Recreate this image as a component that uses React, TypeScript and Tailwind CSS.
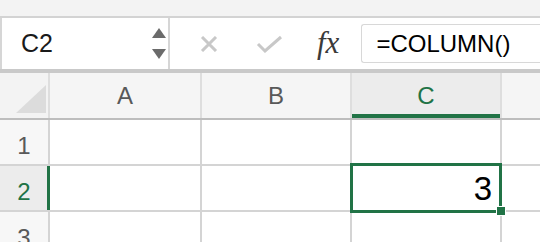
import React from "react";

const GREEN = "#217346";

function Stepper() {
  return (
    <div className="flex flex-col gap-[11px] items-center">
      <svg width="14" height="10" viewBox="0 0 14 10">
        <polygon points="7,0 14,10 0,10" fill="#6b6b6b" />
      </svg>
      <svg width="14" height="10" viewBox="0 0 14 10">
        <polygon points="0,0 14,0 7,10" fill="#6b6b6b" />
      </svg>
    </div>
  );
}

export default function App() {
  const cell = "bg-white h-[44px]";
  const rowNum = "h-[44px] flex items-center justify-center text-[24px] pt-[7px]";
  return (
    <div
      className="w-[540px] h-[242px] overflow-hidden bg-white"
      style={{ fontFamily: "'Liberation Sans', Arial, sans-serif" }}
    >
      {/* top band */}
      <div className="h-[16px] bg-[#f3f3f3] border-b-2 border-[#d3d3d3] box-content" />

      {/* formula bar */}
      <div className="flex h-[51px] bg-white">
        <div className="w-[168px] flex items-center pl-[19px] pr-[2px] border-l-2 border-[#d6d6d6]">
          <span className="text-[25px] text-[#1a1a1a] flex-1">C2</span>
          <Stepper />
        </div>
        <div className="w-[2px] bg-[#d6d6d6]" />
        <div className="flex-1 flex items-center">
          <svg className="ml-[30px]" width="18" height="16" viewBox="0 0 18 16">
            <path d="M2 1 L16 15 M16 1 L2 15" stroke="#c8c8c8" strokeWidth="3" />
          </svg>
          <svg className="ml-[38px]" width="27" height="18" viewBox="0 0 27 18">
            <path d="M2 9 L9 16 L25 2" stroke="#c8c8c8" strokeWidth="3" fill="none" />
          </svg>
          <span
            className="ml-[34px] text-[31px] italic text-[#3a3a3a] leading-none -mt-[2px]"
            style={{ fontFamily: "'Liberation Serif', 'Times New Roman', serif" }}
          >
            fx
          </span>
          <div className="ml-[22px] self-end mb-[6px] h-[39px] flex-1 border border-r-0 border-[#d8d8d8] rounded-l-[3px] flex items-center pl-[14px]">
            <span className="text-[24px] text-black">=COLUMN()</span>
          </div>
        </div>
      </div>

      {/* separator */}
      <div className="border-t-2 border-b-2 border-[#c9c9c9] bg-[#ececec] h-[0px] box-content" />

      {/* column headers */}
      <div className="grid grid-cols-[48px_150px_148px_148px_1fr] gap-x-[2px] bg-[#dedede] border-b-2 border-[#bdbdbd]">
        <div className="h-[45px] bg-[#f3f3f3] flex items-end justify-end pr-[2px] pb-[5px]">
          <svg width="30" height="28" viewBox="0 0 30 28">
            <polygon points="30,0 30,28 0,28" fill="#dcdcdc" />
          </svg>
        </div>
        <div className="h-[45px] bg-[#f5f5f5] flex items-center justify-center text-[24px] text-[#595959]">A</div>
        <div className="h-[45px] bg-[#f5f5f5] flex items-center justify-center text-[24px] text-[#595959]">B</div>
        <div
          className="h-[45px] bg-[#ececec] flex items-center justify-center text-[24px] border-b-4"
          style={{ color: GREEN, borderColor: GREEN }}
        >
          <span className="mt-[4px]">C</span>
        </div>
        <div className="h-[45px] bg-[#f5f5f5]" />
      </div>

      {/* body */}
      <div className="grid grid-cols-[48px_150px_148px_148px_1fr] gap-[2px] bg-[#d4d4d4]">
        <div className={`${rowNum} bg-[#f7f7f7] text-[#595959]`}>1</div>
        <div className={cell} />
        <div className={cell} />
        <div className={cell} />
        <div className={cell} />

        <div className={`${rowNum} bg-[#ececec] relative`} style={{ color: GREEN }}>
          2
          <div className="absolute right-[-2px] top-0 bottom-0 w-[3px]" style={{ backgroundColor: GREEN }} />
        </div>
        <div className={cell} />
        <div className={cell} />
        <div className={`${cell} relative flex items-center justify-end pr-[8px]`}>
          <span className="text-[33px] text-black leading-none">3</span>
          <div
            className="absolute -top-[3px] -bottom-[3px] -left-[2px] -right-[2px] border-[3px]"
            style={{ borderColor: GREEN }}
          />
          <div
            className="absolute -right-[6px] -bottom-[6px] w-[10px] h-[10px] border border-white"
            style={{ backgroundColor: GREEN }}
          />
        </div>
        <div className={cell} />

        <div className={`${rowNum} bg-[#f7f7f7] text-[#595959]`}>3</div>
        <div className={cell} />
        <div className={cell} />
        <div className={cell} />
        <div className={cell} />
      </div>
    </div>
  );
}
